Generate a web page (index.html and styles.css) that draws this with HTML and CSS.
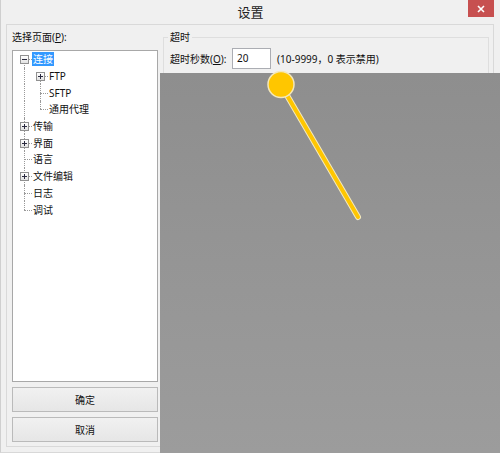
FILE: index.html
```html
<!DOCTYPE html>
<html lang="zh-CN">
<head>
<meta charset="utf-8">
<title>设置</title>
<link rel="stylesheet" href="styles.css">
</head>
<body>
<div class="window">
  <div class="titlebar">
    <span class="title">设置</span>
    <button class="close" type="button" aria-label="关闭">
      <svg width="8" height="8" viewBox="0 0 8 8"><path d="M1 1L7 7M7 1L1 7" stroke="#fff" stroke-width="1.6" fill="none"/></svg>
    </button>
  </div>
  <div class="frame">
    <div class="side">
      <div class="side-label">选择页面(<u>P</u>):</div>
      <div class="tree">
        <div class="row"><span class="g first"><i class="box"></i></span><span class="lbl sel">连接</span></div>
        <div class="row"><span class="g v"></span><span class="g first"><i class="box plus"></i></span><span class="lbl">FTP</span></div>
        <div class="row"><span class="g v"></span><span class="g tee"></span><span class="lbl">SFTP</span></div>
        <div class="row"><span class="g v"></span><span class="g end"></span><span class="lbl">通用代理</span></div>
        <div class="row"><span class="g tee"><i class="box plus"></i></span><span class="lbl">传输</span></div>
        <div class="row"><span class="g tee"><i class="box plus"></i></span><span class="lbl">界面</span></div>
        <div class="row"><span class="g tee"></span><span class="lbl">语言</span></div>
        <div class="row"><span class="g tee"><i class="box plus"></i></span><span class="lbl">文件编辑</span></div>
        <div class="row"><span class="g tee"></span><span class="lbl">日志</span></div>
        <div class="row"><span class="g end"></span><span class="lbl">调试</span></div>
      </div>
      <button class="btn" type="button">确定</button>
      <button class="btn" type="button">取消</button>
    </div>
    <fieldset class="group">
      <legend>超时</legend>
      <div class="field">
        <label>超时秒数(<u>O</u>):</label>
        <span class="input">20</span>
        <span class="hint">(10-9999，0 表示禁用)</span>
      </div>
    </fieldset>
  </div>
</div>
<div class="shade"></div>
<svg class="marker" viewBox="0 0 500 453" width="500" height="453">
  <line x1="281" y1="85" x2="358" y2="217" stroke="#f4e9bd" stroke-width="6" stroke-linecap="round"/>
  <line x1="281" y1="85" x2="358" y2="217" stroke="#ffc600" stroke-width="4" stroke-linecap="round"/>
  <circle cx="281" cy="84.5" r="13" fill="#ffc600" stroke="#f3e7ba" stroke-width="1.5"/>
</svg>
</body>
</html>
```
FILE: styles.css
```css
* { box-sizing: border-box; }
html, body { margin: 0; padding: 0; }
body {
  width: 500px;
  height: 453px;
  overflow: hidden;
  background: #f0f0f0;
  font-family: "Noto Sans", "Noto Sans CJK SC", sans-serif;
  font-size: 10px;
  color: #111;
}
.window {
  width: 500px;
  height: 453px;
  border-left: 1px solid #cfcfcf;
  border-bottom: 1px solid #d8d8d8;
}
.titlebar {
  height: 24px;
  display: grid;
  grid-template-columns: 1fr auto 1fr;
}
.title {
  grid-column: 2;
  font-size: 13px;
  line-height: 24px;
  color: #222;
}
.close {
  grid-column: 3;
  justify-self: end;
  align-self: start;
  width: 26px;
  height: 17px;
  margin: 0 6px 0 0;
  padding: 0;
  border: none;
  background: #c75050;
  display: flex;
  align-items: center;
  justify-content: center;
}
.frame {
  margin-left: 5px;
  width: 488px;
  height: 423px;
  border: 1px solid #d9d9d9;
  padding: 4px 4px 3px 5px;
  display: flex;
  gap: 5px;
}
.side {
  width: 146px;
  flex: none;
  display: flex;
  flex-direction: column;
}
.side-label {
  line-height: 16px;
  margin-bottom: 5px;
  white-space: nowrap;
}
.tree {
  height: 332px;
  flex: none;
  background: #fff;
  border: 1px solid #a8a8a8;
  padding-left: 3px;
  margin-bottom: 5px;
}
.row {
  height: 16.7px;
  display: flex;
  align-items: center;
}
.g {
  width: 16px;
  flex: none;
  align-self: stretch;
  position: relative;
}
.g::before, .g::after {
  content: "";
  position: absolute;
}
.v::before, .tee::before {
  left: 8px; top: 0; bottom: 0;
  border-left: 1px dotted #9a9a9a;
}
.end::before {
  left: 8px; top: 0; height: 50%;
  border-left: 1px dotted #9a9a9a;
}
.first::before {
  left: 8px; top: 50%; bottom: 0;
  border-left: 1px dotted #9a9a9a;
}
.tee::after, .end::after, .first::after {
  left: 8px; right: 0; top: 50%;
  border-top: 1px dotted #9a9a9a;
}
.v::after { display: none; }
.box {
  position: absolute;
  left: 4px;
  top: calc(50% - 4px);
  width: 9px;
  height: 9px;
  border: 1px solid #919191;
  background: linear-gradient(#ffffff, #e2e2e2);
  z-index: 1;
}
.box::before {
  content: "";
  position: absolute;
  left: 1px; right: 1px; top: 3px;
  height: 1px;
  background: #2b2b40;
}
.plus::after {
  content: "";
  position: absolute;
  top: 1px; bottom: 1px; left: 3px;
  width: 1px;
  background: #2b2b40;
}
.lbl {
  padding: 0 1px;
  line-height: 14px;
  white-space: nowrap;
}
.sel {
  background: #3399ff;
  color: #fff;
}
.btn {
  height: 25px;
  margin: 0;
  padding: 0;
  border: 1px solid #bababa;
  background: linear-gradient(#f1f1f1, #e6e6e6);
  font: inherit;
  color: #111;
}
.btn + .btn { margin-top: 5px; }
.group {
  flex: 1;
  min-width: 0;
  margin: 0;
  border: 1px solid #dedede;
  padding: 3px 6px;
}
.group legend {
  padding: 0 2px;
  margin-left: -2px;
  line-height: 16px;
}
.field {
  display: flex;
  align-items: center;
}
.field label { width: 62px; flex: none; white-space: nowrap; }
.input {
  width: 39px;
  height: 21px;
  flex: none;
  border: 1px solid #abadb3;
  background: #fff;
  padding-left: 4px;
  line-height: 19px;
}
.hint { margin-left: 6px; white-space: nowrap; }
.shade {
  position: absolute;
  left: 160px;
  top: 73px;
  right: 0;
  bottom: 0;
  background: linear-gradient(#8e8e8e, #9c9c9c);
}
.marker {
  position: absolute;
  left: 0;
  top: 0;
  pointer-events: none;
}
```
